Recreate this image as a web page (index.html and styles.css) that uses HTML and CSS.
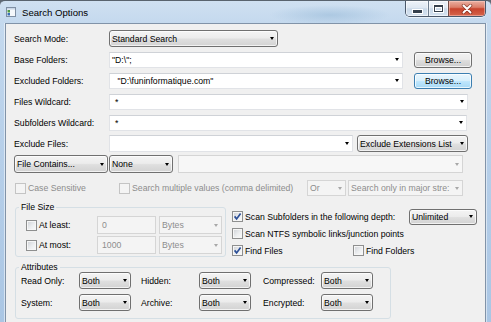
FILE: index.html
```html
<!DOCTYPE html>
<html>
<head>
<meta charset="utf-8">
<title>Search Options</title>
<link rel="stylesheet" href="styles.css">
</head>
<body>
<div class="window">
  <div class="titlebar">
    <svg class="appicon" viewBox="0 0 10 10"><rect x="0.5" y="0.5" width="9" height="9" fill="#f5f8fb" stroke="#7f8fa3"/><rect x="1" y="1" width="8" height="1.5" fill="#c9d6e6"/><rect x="1.5" y="3" width="2.5" height="2.5" fill="#4f9a45"/><rect x="1.5" y="6" width="2.5" height="2.5" fill="#3a6fb5"/></svg>
    <span class="title">Search Options</span>
    <div class="caption">
      <div class="cbtn min"><span class="g-min"></span></div>
      <div class="cbtn max"><span class="g-max"></span></div>
      <div class="cbtn close"><svg class="g-close" viewBox="0 0 12 10"><path d="M2.5 1.5 L9.5 8.5 M9.5 1.5 L2.5 8.5" stroke="#5a1c12" stroke-width="3.6" stroke-linecap="round" opacity="0.55"/><path d="M2.5 1.5 L9.5 8.5 M9.5 1.5 L2.5 8.5" stroke="#ffffff" stroke-width="1.9" stroke-linecap="round"/></svg></div>
    </div>
  </div>
  <div class="frame">
    <div class="client">
      <div class="row">
        <span class="lbl">Search Mode:</span>
        <div class="combo ro w-mode"><span class="txt">Standard Search</span><i class="arrow"></i></div>
      </div>
      <div class="row">
        <span class="lbl">Base Folders:</span>
        <div class="combo edit w-folder"><span class="txt">"D:\";</span><i class="arrow"></i></div>
        <button class="btn">Browse...</button>
      </div>
      <div class="row">
        <span class="lbl">Excluded Folders:</span>
        <div class="combo edit w-folder"><span class="txt ind"> "D:\funinformatique.com"</span><i class="arrow"></i></div>
        <button class="btn focus">Browse...</button>
      </div>
      <div class="row">
        <span class="lbl">Files Wildcard:</span>
        <div class="combo edit w-wild"><span class="txt ind">*</span><i class="arrow"></i></div>
      </div>
      <div class="row">
        <span class="lbl">Subfolders Wildcard:</span>
        <div class="combo edit w-wild2"><span class="txt ind">*</span><i class="arrow"></i></div>
      </div>
      <div class="row">
        <span class="lbl">Exclude Files:</span>
        <div class="combo edit w-excl"><span class="txt"></span><i class="arrow"></i></div>
        <div class="combo ro w-extlist"><span class="txt">Exclude Extensions List</span><i class="arrow"></i></div>
      </div>
      <div class="row r7">
        <div class="combo ro w-contains"><span class="txt">File Contains...</span><i class="arrow"></i></div>
        <div class="combo ro w-none"><span class="txt">None</span><i class="arrow"></i></div>
        <div class="combo dis w-value"><span class="txt"></span><i class="arrow"></i></div>
      </div>
      <div class="row r8">
        <label class="check dtext c1"><span class="cb off"></span>Case Sensitive</label>
        <label class="check dtext c2"><span class="cb off"></span>Search multiple values (comma delimited)</label>
        <div class="combo dis w-or"><span class="txt">Or</span><i class="arrow"></i></div>
        <div class="combo dis w-major"><span class="txt">Search only in major stre:</span><i class="arrow"></i></div>
      </div>

      <div class="lower">
        <fieldset class="group fs-size">
          <legend>File Size</legend>
          <div class="szrow">
            <label class="check sz"><span class="cb"></span>At least:</label>
            <div class="combo dis inp"><span class="txt">0</span></div>
            <div class="combo dis w-bytes"><span class="txt">Bytes</span><i class="arrow"></i></div>
          </div>
          <div class="szrow second">
            <label class="check sz"><span class="cb"></span>At most:</label>
            <div class="combo dis inp"><span class="txt">1000</span></div>
            <div class="combo dis w-bytes"><span class="txt">Bytes</span><i class="arrow"></i></div>
          </div>
        </fieldset>
        <div class="rcol">
          <div class="rrow first">
            <label class="check depth"><span class="cb on"><svg viewBox="0 0 9 9"><path d="M1.6 4.4 L3.6 6.9 L7.6 1.6" fill="none" stroke="#2c4f97" stroke-width="1.7"/></svg></span>Scan Subfolders in the following depth:</label>
            <div class="combo ro w-depth"><span class="txt">Unlimited</span><i class="arrow"></i></div>
          </div>
          <div class="rrow">
            <label class="check"><span class="cb"></span>Scan NTFS symbolic links/junction points</label>
          </div>
          <div class="rrow">
            <label class="check ff"><span class="cb on"><svg viewBox="0 0 9 9"><path d="M1.6 4.4 L3.6 6.9 L7.6 1.6" fill="none" stroke="#2c4f97" stroke-width="1.7"/></svg></span>Find Files</label>
            <label class="check"><span class="cb"></span>Find Folders</label>
          </div>
        </div>
      </div>

      <fieldset class="group fs-attr">
        <legend>Attributes</legend>
        <div class="attr">
          <span>Read Only:</span>
          <div class="combo ro w-both"><span class="txt">Both</span><i class="arrow"></i></div>
          <span>Hidden:</span>
          <div class="combo ro w-both"><span class="txt">Both</span><i class="arrow"></i></div>
          <span>Compressed:</span>
          <div class="combo ro w-both"><span class="txt">Both</span><i class="arrow"></i></div>
          <span>System:</span>
          <div class="combo ro w-both"><span class="txt">Both</span><i class="arrow"></i></div>
          <span>Archive:</span>
          <div class="combo ro w-both"><span class="txt">Both</span><i class="arrow"></i></div>
          <span>Encrypted:</span>
          <div class="combo ro w-both"><span class="txt">Both</span><i class="arrow"></i></div>
        </div>
      </fieldset>
    </div>
  </div>
</div>
</body>
</html>
```

FILE: styles.css
```css
* { box-sizing: border-box; }
html, body { margin: 0; padding: 0; }
body {
  width: 491px;
  height: 322px;
  overflow: hidden;
  background: #5f6873;
  font-family: "Liberation Sans", Arial, sans-serif;
  font-size: 8.7px;
  color: #000;
}

.window {
  width: 491px;
  height: 322px;
  display: flex;
  flex-direction: column;
  border-top: 1px solid #59636e;
  border-radius: 5px 5px 0 0;
  background:
    radial-gradient(ellipse 60px 10px at 330px 14px, rgba(150,185,215,0.55), rgba(150,185,215,0) 100%),
    linear-gradient(180deg, #cfe0f1 0px, #c4d9ee 22px, #b9d1ea 120px, #aac6e4 322px);
}

/* title bar */
.titlebar {
  height: 22px;
  flex: none;
  display: flex;
  align-items: center;
}
.appicon { width: 10px; height: 10px; margin-left: 6px; flex: none; }
.title {
  margin-left: 6px;
  padding-top: 1px;
  font-size: 9.6px;
  color: #000;
}
.caption {
  margin-left: auto;
  margin-right: 5px;
  align-self: flex-start;
  display: flex;
  height: 16px;
  border: 1px solid #4a586a;
  border-top: 0;
  border-radius: 0 0 5px 5px;
  overflow: hidden;
  box-shadow: 0 1px 0 rgba(255,255,255,0.6);
}
.cbtn {
  height: 100%;
  display: flex;
  align-items: center;
  justify-content: center;
}
.min, .max {
  background: linear-gradient(180deg, #eef3f9 0%, #dfe8f2 45%, #c9d8e8 52%, #d6e3f0 100%);
  box-shadow: inset 0 0 0 1px rgba(255,255,255,0.55);
}
.min { width: 23px; border-right: 1px solid #6e7d8e; }
.max { width: 20px; border-right: 1px solid #6f4a44; }
.close {
  width: 36px;
  background: linear-gradient(180deg, #eab0a2 0%, #dc7e69 42%, #c8442d 52%, #d5654c 100%);
  box-shadow: inset 0 0 0 1px rgba(255,210,200,0.5);
}
.g-min {
  width: 9px; height: 3px;
  margin-top: 6px;
  background: #343f4c;
  box-shadow: 0 0 0 1px #fff;
}
.g-max {
  width: 9px; height: 7px;
  border: 1px solid #343f4c;
  border-top-width: 2px;
  box-shadow: 0 0 0 1px #fff, inset 0 0 0 1px #fff;
}
.g-close { width: 12px; height: 10px; }

/* frame + client */
.frame {
  flex: 1;
  min-height: 0;
  display: flex;
  padding: 0 5px;
}
.client {
  flex: 1;
  border: 1px solid #8193a8;
  border-bottom: 0;
  background: #f0f0f0;
  padding: 6px 0 0 8px;
  box-shadow: -1px 0 0 rgba(255,255,255,0.5), 1px 0 0 rgba(255,255,255,0.5);
}

.row {
  display: flex;
  align-items: center;
  height: 17px;
  margin-top: 4px;
}
.row:first-child { margin-top: 0; }
.r7 { margin-top: 3px; height: 18px; }
.r8 { margin-top: 7px; height: 16px; }
.lbl { width: 95px; flex: none; white-space: nowrap; }

/* combos */
.combo {
  display: flex;
  align-items: center;
  height: 17px;
  flex: none;
  padding-left: 2px;
  white-space: nowrap;
  overflow: hidden;
}
.combo .txt { flex: 1; min-width: 0; white-space: pre; }
.combo .txt.ind { padding-left: 3px; }
.combo .arrow {
  flex: none;
  width: 0; height: 0;
  border-left: 2.5px solid transparent;
  border-right: 2.5px solid transparent;
  border-top: 3px solid #000;
  margin: 0 3px 0 5px;
}
.ro {
  border: 1px solid #707070;
  border-radius: 3px;
  background: linear-gradient(180deg, #f4f4f4 0%, #ececec 46%, #dfdfdf 54%, #d3d3d3 100%);
  box-shadow: inset 0 0 0 1px rgba(255,255,255,0.7);
}
.edit {
  background: #fff;
  border: 1px solid #e1e3e7;
  border-top-color: #cfd2d7;
}
.dis {
  background: #f4f4f4;
  border: 1px solid #d5d5d5;
  color: #8d8d8d;
}
.dis .arrow { border-top-color: #a8a8a8; }

.w-mode { width: 169px; }
.w-folder { width: 294px; height: 16px; }
.w-wild { width: 359px; height: 16px; }
.w-wild2 { width: 358px; height: 16px; }
.w-excl { width: 244px; }
.w-extlist { width: 111px; margin-left: 4px; }
.w-contains { width: 94px; height: 18px; }
.w-none { width: 64px; height: 18px; margin-left: 1px; }
.w-value { width: 285px; height: 18px; margin-left: 5px; background: #f7f7f7; }
.w-or { width: 39px; height: 16px; }
.w-major { width: 115px; height: 16px; margin-left: 2px; }
.w-major .arrow { margin-left: 3px; }
.w-bytes { width: 63px; height: 18px; margin-left: 3px; }
.inp { width: 59px; height: 18px; padding-left: 4px; }
.w-depth { width: 68px; height: 16px; }
.w-both { width: 52px; }

/* buttons */
.btn {
  width: 58px;
  height: 16px;
  margin-left: 11px;
  padding: 0;
  border: 1px solid #707070;
  border-radius: 3px;
  background: linear-gradient(180deg, #f2f2f2 0%, #ebebeb 46%, #dddddd 54%, #cfcfcf 100%);
  box-shadow: inset 0 0 0 1px rgba(255,255,255,0.75);
  font: inherit;
  color: #000;
}
.btn.focus {
  border-color: #3c7fb1;
  background: linear-gradient(180deg, #eaf6fd 0%, #d9f0fc 46%, #bee6fd 54%, #a7d9f5 100%);
}

/* checkboxes */
.check {
  display: flex;
  align-items: center;
  white-space: nowrap;
  flex: none;
}
.cb {
  display: block;
  width: 11px;
  height: 11px;
  flex: none;
  margin-right: 2px;
  border: 1px solid #8e8f8f;
  background: linear-gradient(135deg, #cdd0d5 0%, #eceef0 55%, #fbfbfb 100%);
  box-shadow: inset 0 0 0 1px #f6f6f6;
}
.cb svg { display: block; width: 9px; height: 9px; }
.dtext { color: #8d8d8d; }
.cb.off {
  border-color: #c4c4c4;
  background: #f4f4f4;
  box-shadow: none;
}
.c1 { width: 104px; margin-left: 1px; }
.c2 { width: 188px; }

/* lower area */
.lower {
  display: flex;
  align-items: flex-start;
  height: 55px;
  margin-top: 6px;
}
.group {
  margin: 0;
  border: 1px solid #d5dfe5;
  border-radius: 3px;
  min-width: 0;
}
.group legend {
  padding: 0 2px;
  margin-left: 0;
  line-height: 10px;
  font-size: 8.7px;
}
.fs-size {
  margin-left: 1px;
  width: 211px;
  padding: 4px 3px 2px 3px;
}
.szrow {
  display: flex;
  align-items: center;
  height: 18px;
  margin-left: 7px;
}
.szrow.second { margin-top: 2px; }
.check.sz { width: 71px; }

.rcol {
  margin-left: 6px;
  display: flex;
  flex-direction: column;
}
.rrow {
  display: flex;
  align-items: center;
  height: 17px;
}
.rrow.first { margin-top: 6px; }
.check.depth { width: 177px; }
.check.ff { width: 121px; }

.fs-attr {
  margin-top: 5px;
  margin-left: 1px;
  width: 376px;
  padding: 0 0 7px 3px;
}
.attr {
  display: grid;
  grid-template-columns: 58px 62px 58px 64px 58px 52px;
  grid-auto-rows: 17px;
  row-gap: 5px;
  align-items: center;
  margin-left: 2px;
  white-space: nowrap;
}
```
